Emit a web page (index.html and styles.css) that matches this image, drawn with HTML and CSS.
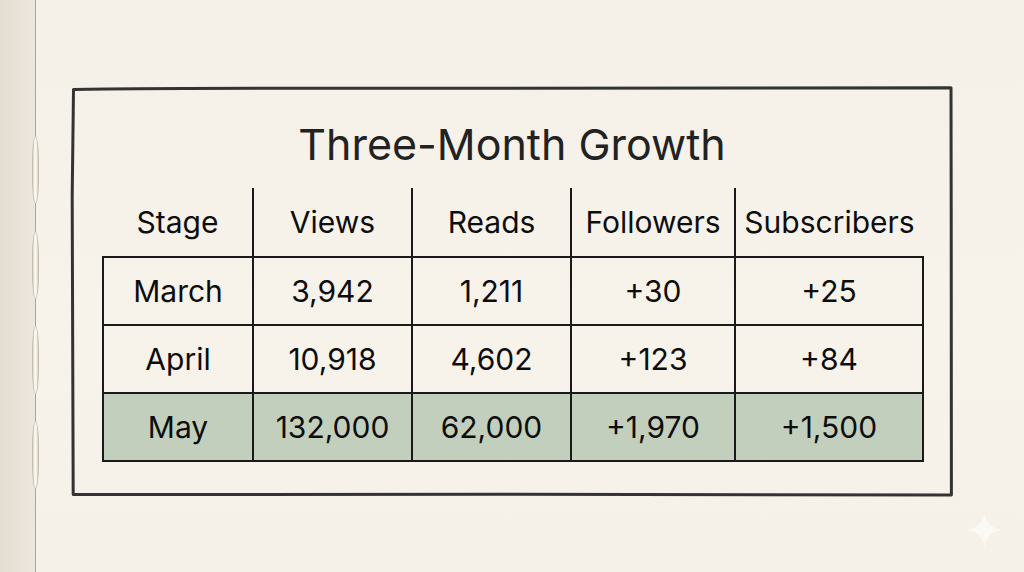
FILE: index.html
```html
<!DOCTYPE html>
<html lang="en">
<head>
<meta charset="utf-8">
<title>Three-Month Growth</title>
<link rel="stylesheet" href="styles.css">
</head>
<body>
<div class="page">
  <aside class="spine">
    <span class="stitch"></span>
    <span class="stitch"></span>
    <span class="stitch"></span>
    <span class="stitch"></span>
  </aside>
  <main class="sheet">
    <section class="frame">
      <svg class="frame-line" viewBox="0 0 882 410" preserveAspectRatio="none" aria-hidden="true">
        <path d="M2.5 3.5 C120 1.5 260 2.8 420 2.2 C600 1.6 760 2.6 880 1.8 L880.2 120 C880.6 220 879.8 320 880.4 408 C760 406.6 600 407.4 440 407.2 C280 407 140 408 2.2 407.6 C1.4 300 0.6 200 1.2 110 C1.6 60 2.2 30 2.5 3.5 Z" />
      </svg>
      <h1 class="title">Three-Month Growth</h1>
      <table class="growth">
        <colgroup>
          <col class="c1"><col class="c2"><col class="c3"><col class="c4"><col class="c5">
        </colgroup>
        <thead>
          <tr>
            <th>Stage</th><th>Views</th><th>Reads</th><th>Followers</th><th>Subscribers</th>
          </tr>
        </thead>
        <tbody>
          <tr><td>March</td><td>3,942</td><td>1,211</td><td>+30</td><td>+25</td></tr>
          <tr><td>April</td><td>10,918</td><td>4,602</td><td>+123</td><td>+84</td></tr>
          <tr class="highlight"><td>May</td><td>132,000</td><td>62,000</td><td>+1,970</td><td>+1,500</td></tr>
        </tbody>
      </table>
    </section>
  </main>
  <svg class="sparkle" viewBox="0 0 24 24" aria-hidden="true">
    <path d="M12 0 C12 6.6 17.4 12 24 12 C17.4 12 12 17.4 12 24 C12 17.4 6.6 12 0 12 C6.6 12 12 6.6 12 0 Z"/>
  </svg>
</div>
</body>
</html>
```

FILE: styles.css
```css
* { box-sizing: border-box; }

html, body {
  margin: 0;
  padding: 0;
  width: 1024px;
  height: 572px;
  overflow: hidden;
  background: #f6f2ea;
  font-family: Inter, "Noto Sans", "Liberation Sans", sans-serif;
}

.page {
  position: relative;
  display: flex;
  width: 1024px;
  height: 572px;
  background: linear-gradient(180deg, #f5f1e9 0%, #f7f3eb 60%, #f5f1e8 100%);
}

.spine {
  flex: 0 0 36px;
  height: 572px;
  display: flex;
  flex-direction: column;
  align-items: flex-end;
  gap: 27px;
  padding-top: 136px;
  background: linear-gradient(90deg, #e4ddd2 0%, #e9e3d9 60%, #ece7de 100%);
  border-right: 1px solid #aca597;
}

.stitch {
  position: relative;
  z-index: 1;
  display: block;
  width: 7px;
  height: 68px;
  margin-right: -4px;
  border-radius: 4px / 30px;
  background: linear-gradient(90deg, #ddd5c8 0%, #fdfcf8 40%, #f3efe6 70%, #d6cebf 100%);
  border: 1px solid #c6bdad;
}

.sheet {
  flex: 1 1 auto;
  padding: 86px 0 0 35px;
}

.frame {
  position: relative;
  width: 882px;
  padding: 31px 31px 35px;
}

.frame-line {
  position: absolute;
  inset: 0;
  width: 100%;
  height: 100%;
  overflow: visible;
}

.frame-line path {
  fill: none;
  stroke: #333;
  stroke-width: 3;
  stroke-linejoin: round;
  vector-effect: non-scaling-stroke;
}

.title {
  margin: 0 0 17px;
  font-size: 43px;
  line-height: 54px;
  font-weight: 400;
  text-align: center;
  color: #222;
}

.growth {
  width: 820px;
  table-layout: fixed;
  border-collapse: collapse;
  color: #0d0d0d;
  font-size: 30px;
}

.c1 { width: 150px; }
.c2 { width: 159px; }
.c3 { width: 159px; }
.c4 { width: 164px; }
.c5 { width: 188px; }

.growth th,
.growth td {
  padding: 0;
  text-align: center;
  font-weight: 400;
  white-space: nowrap;
  line-height: 36px;
}

.growth th {
  height: 69px;
  border-left: 2px solid #1a1a1a;
}

.growth th:first-child { border-left: none; }

.growth td {
  height: 68px;
  border: 2px solid #1a1a1a;
}

.growth .highlight td {
  background: #c3cfbd;
}

.sparkle {
  position: absolute;
  left: 966px;
  top: 511px;
  width: 37px;
  height: 38px;
}

.sparkle path { fill: #fbf9f3; }
```
